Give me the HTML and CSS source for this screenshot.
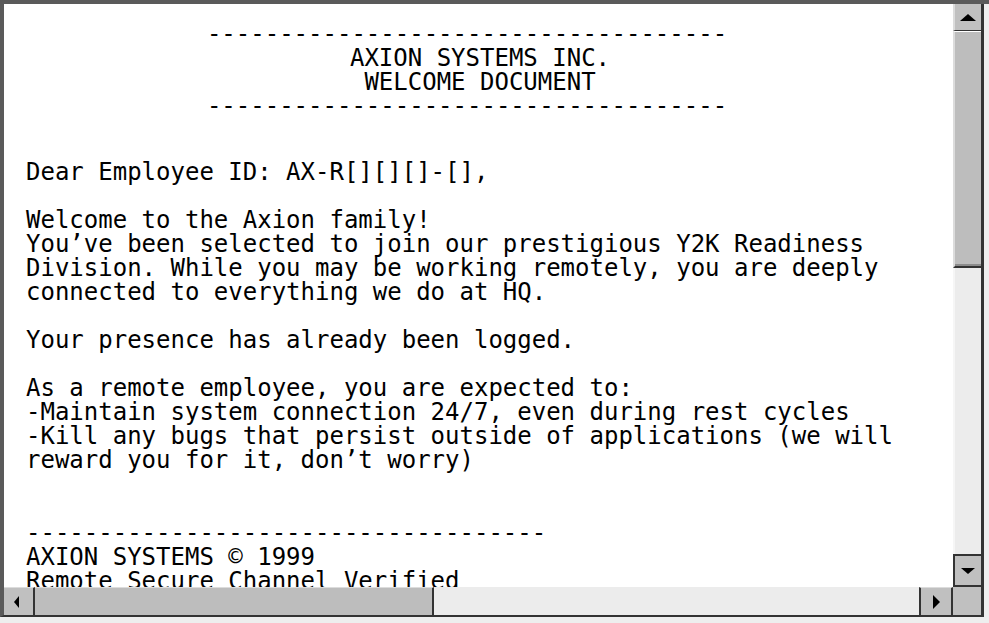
FILE: index.html
```html
<!DOCTYPE html>
<html>
<head>
<meta charset="utf-8">
<title>Axion Systems - Welcome Document</title>
<link rel="stylesheet" href="styles.css">
</head>
<body>
<div class="frame">
  <div class="window">
    <div class="viewport">
      <div class="doc">
        <div class="header">
          <div class="rule">------------------------------------</div>
          <div>AXION SYSTEMS INC.</div>
          <div>WELCOME DOCUMENT</div>
          <div class="rule">------------------------------------</div>
        </div>
        <p class="greeting">Dear Employee ID: AX-R[][][]-[],</p>
        <p>Welcome to the Axion family!<br>You’ve been selected to join our prestigious Y2K Readiness Division. While you may be working remotely, you are deeply connected to everything we do at HQ.</p>
        <p>Your presence has already been logged.</p>
        <p>As a remote employee, you are expected to:<br>-Maintain system connection 24/7, even during rest cycles<br>-Kill any bugs that persist outside of applications (we will reward you for it, don’t worry)</p>
        <div class="footer">
          <div>------------------------------------</div>
          <div>AXION SYSTEMS © 1999</div>
          <div>Remote Secure Channel Verified</div>
        </div>
      </div>
    </div>
    <div class="vscroll">
      <div class="vbtn vbtn-up"><span class="arrow arrow-up"></span></div>
      <div class="vthumb"></div>
      <div class="vtrack"></div>
      <div class="vbtn vbtn-down"><span class="arrow arrow-down"></span></div>
    </div>
    <div class="hscroll">
      <div class="hbtn hbtn-left"><span class="arrow arrow-left"></span></div>
      <div class="hthumb"></div>
      <div class="htrack"></div>
      <div class="hbtn hbtn-right"><span class="arrow arrow-right"></span></div>
    </div>
    <div class="corner"></div>
  </div>
</div>
</body>
</html>
```
FILE: styles.css
```css
html, body {
  margin: 0;
  padding: 0;
}

body {
  width: 989px;
  height: 623px;
  overflow: hidden;
  background: #eeeeee;
}

.frame {
  width: 989px;
  height: 623px;
  box-sizing: border-box;
  border-top: 4px solid #5a5a5a;
}

.window {
  width: 984px;
  height: 613px;
  box-sizing: border-box;
  border-left: 4px solid #5a5a5a;
  border-right: 3px solid #333333;
  border-bottom: 2px solid #333333;
  display: grid;
  grid-template-columns: 949px 28px;
  grid-template-rows: 583px 28px;
  background: #ffffff;
}

/* ---------- document ---------- */
.viewport {
  overflow: hidden;
  background: #ffffff;
}

.doc {
  padding: 18px 19px 0 22px;
  font-family: "DejaVu Sans Mono", monospace;
  font-size: 24px;
  line-height: 24px;
  color: #000000;
}

.header {
  text-align: center;
}

.rule {
  padding-right: 26px;
}

.doc p {
  margin: 24px 0 0 0;
}

.doc p.greeting {
  margin-top: 42px;
}

.footer {
  margin-top: 49px;
}

/* ---------- vertical scrollbar ---------- */
.vscroll {
  display: flex;
  flex-direction: column;
  background: #ececec;
}

.vbtn {
  display: flex;
  align-items: center;
  justify-content: center;
  background: #c0c0c0;
  box-sizing: border-box;
}

.vbtn-up {
  height: 27px;
  border-left: 2px solid #dcdcdc;
  border-bottom: 1px solid #333333;
}

.vthumb {
  height: 237px;
  box-sizing: border-box;
  background: #bdbdbd;
  border-top: 1px solid #ffffff;
  border-left: 2px solid #dcdcdc;
  border-bottom: 2px solid #333333;
  box-shadow: inset 0 -2px 0 #8c8c8c;
}

.vtrack {
  flex: 1;
  background: #ececec;
  border-left: 2px solid #f6f6f6;
}

.vbtn-down {
  height: 33px;
  border-top: 2px solid #333333;
  border-left: 2px solid #333333;
  border-bottom: 2px solid #333333;
}

/* ---------- horizontal scrollbar ---------- */
.hscroll {
  display: flex;
  background: #ececec;
}

.hbtn {
  display: flex;
  align-items: center;
  background: #c0c0c0;
  box-sizing: border-box;
  border-top: 1px solid #dcdcdc;
}

.hbtn-left {
  width: 31px;
  padding-left: 10px;
  border-right: 2px solid #333333;
}

.hthumb {
  width: 399px;
  box-sizing: border-box;
  background: #bdbdbd;
  border-top: 1px solid #dcdcdc;
  border-right: 2px solid #333333;
}

.htrack {
  flex: 1;
  background: #ececec;
}

.hbtn-right {
  width: 34px;
  justify-content: center;
  border-left: 2px solid #333333;
  border-right: 2px solid #333333;
}

.corner {
  background: #c0c0c0;
}

/* ---------- arrows ---------- */
.arrow {
  display: block;
  width: 0;
  height: 0;
}

.arrow-up {
  border-left: 8px solid transparent;
  border-right: 8px solid transparent;
  border-bottom: 7px solid #000000;
}

.arrow-down {
  border-left: 7px solid transparent;
  border-right: 7px solid transparent;
  border-top: 6px solid #000000;
}

.arrow-left {
  border-top: 6px solid transparent;
  border-bottom: 6px solid transparent;
  border-right: 5px solid #000000;
}

.arrow-right {
  border-top: 7px solid transparent;
  border-bottom: 7px solid transparent;
  border-left: 7px solid #000000;
}
```
